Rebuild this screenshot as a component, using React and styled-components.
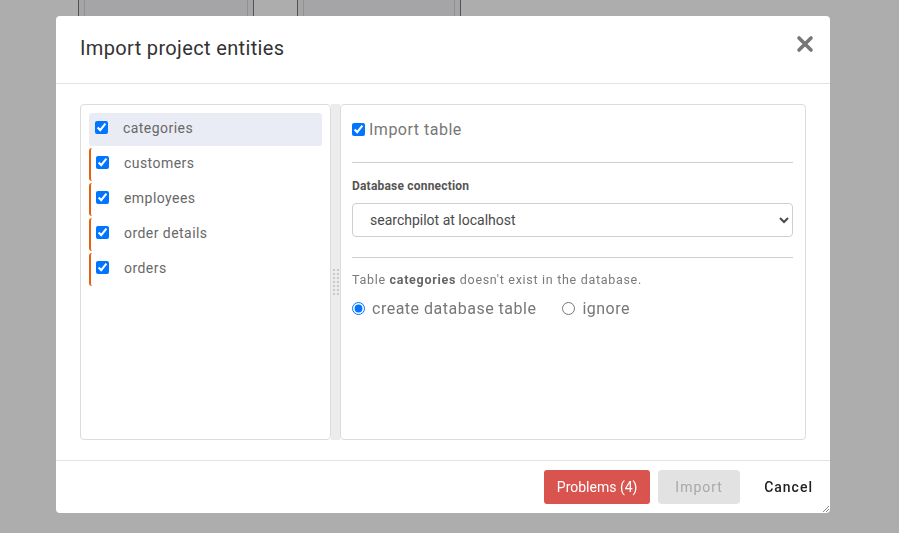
import styled, { createGlobalStyle } from "styled-components";

const GlobalStyle = createGlobalStyle`
  html, body {
    margin: 0;
    padding: 0;
    width: 100%;
    height: 100%;
    overflow: hidden;
    background: #fff;
    font-family: Roboto, "Liberation Sans", Arial, sans-serif;
  }
`;

const Page = styled.div`
  display: flex;
  gap: 43px;
  padding-left: 78px;
  height: 533px;
`;

const BackWindow = styled.div`
  box-sizing: border-box;
  width: ${(props) => props.width}px;
  height: 200px;
  margin-top: -40px;
  border-left: 1px solid #7a7a7a;
  border-right: 1px solid #7a7a7a;
  padding: 0 5px;
  background: #f4f4f8;
`;

const BackInner = styled.div`
  height: 100%;
  border-left: 1px solid #d6d6d6;
  border-right: 1px solid #d6d6d6;
  border-top: ${(props) => props.line}px solid transparent;
  box-shadow: inset 0 ${(props) => props.line}px 0 -${(props) => props.line - 1}px #8a8a8a;
`;

const Overlay = styled.div`
  position: fixed;
  inset: 0;
  background: rgba(0, 0, 0, 0.32);
  padding: 16px 0 0 56px;
`;

const Modal = styled.div`
  position: relative;
  width: 774px;
  height: 497px;
  background: #fff;
  border-radius: 4px;
  display: flex;
  flex-direction: column;
`;

const Header = styled.div`
  height: 68px;
  box-sizing: border-box;
  display: flex;
  align-items: center;
  justify-content: space-between;
  padding: 0 15px 3px 24px;
  border-bottom: 1px solid #e2e2e2;
`;

const Title = styled.h2`
  margin: 0;
  font-size: 20px;
  font-weight: 400;
  color: #333;
  letter-spacing: 0.35px;
`;

const CloseButton = styled.button`
  border: none;
  background: none;
  padding: 0;
  width: 20px;
  height: 20px;
  margin-top: -8px;
  cursor: pointer;
  display: flex;
  align-items: center;
  justify-content: center;
`;

const Body = styled.div`
  flex: 1;
  display: flex;
  padding: 20px 24px;
`;

const Panel = styled.div`
  border: 1px solid #dcdcdc;
  border-radius: 4px;
  background: #fff;
`;

const ListPanel = styled(Panel)`
  width: 251px;
  flex: none;
  box-sizing: border-box;
  padding: 8px;
`;

const EntityItem = styled.label`
  display: flex;
  align-items: center;
  height: 33px;
  margin-bottom: 2px;
  box-sizing: border-box;
  padding-left: ${(props) => (props.selected ? 6 : 5)}px;
  padding-bottom: 4px;
  border-left: ${(props) => (props.selected ? "none" : "2px solid #e8600a")};
  border-radius: 3px;
  background: ${(props) => (props.selected ? "#eaecf5" : "transparent")};
  color: #686868;
  font-size: 14px;
  letter-spacing: 0.45px;
  cursor: pointer;
`;

const Check = styled.input`
  width: 13px;
  height: 13px;
  margin: 0 ${(props) => props.gap || 15}px 0 0;
  flex: none;
`;

const Splitter = styled.div`
  width: 9px;
  flex: none;
  background: #ececec;
  display: flex;
  align-items: center;
  justify-content: center;
`;

const Grip = styled.div`
  display: grid;
  grid-template-columns: 2px 2px;
  gap: 2px;
  margin-top: 20px;
`;

const GripDot = styled.span`
  width: 2px;
  height: 2px;
  background: #c8c8c8;
`;

const DetailPanel = styled(Panel)`
  flex: 1;
  padding: 11px 12px 12px 11px;
`;

const ImportRow = styled.label`
  display: flex;
  align-items: center;
  height: 26px;
  font-size: 16px;
  color: #777;
  letter-spacing: 0.5px;
`;

const Rule = styled.hr`
  border: none;
  border-top: 1px solid #cfcfcf;
  margin: ${(props) => props.top}px 0 0;
`;

const FieldLabel = styled.div`
  margin-top: 15px;
  font-size: 12px;
  line-height: 16px;
  font-weight: 700;
  color: #555;
  letter-spacing: 0.2px;
`;

const Select = styled.select`
  margin-top: 9px;
  width: 100%;
  height: 34px;
  border: 1px solid #cfcfcf;
  border-radius: 4px;
  padding: 0 6px 0 13px;
  font-family: Roboto, "Liberation Sans", Arial, sans-serif;
  font-size: 14px;
  color: #4a4a4a;
  background: #fff;
`;

const Notice = styled.div`
  margin-top: 14px;
  font-size: 12.5px;
  line-height: 16px;
  color: #7a7a7a;
  letter-spacing: 0.7px;

  b {
    color: #666;
  }
`;

const RadioRow = styled.div`
  display: flex;
  align-items: center;
  gap: 26px;
  height: 24px;
  margin-top: 8px;
`;

const RadioOption = styled.label`
  display: flex;
  align-items: center;
  font-size: 16px;
  color: #777;
  letter-spacing: 0.5px;
`;

const Radio = styled.input`
  width: 13px;
  height: 13px;
  margin: 0 7px 0 0;
`;

const Footer = styled.div`
  height: 52px;
  border-top: 1px solid #e2e2e2;
  display: flex;
  align-items: center;
  justify-content: flex-end;
  padding-right: 5px;
`;

const Button = styled.button`
  height: 34px;
  width: ${(props) => (props.width ? `${props.width}px` : "auto")};
  border: none;
  border-radius: ${(props) => (props.variant === "danger" ? 3 : 4)}px;
  padding: 0 ${(props) => props.pad || 0}px;
  margin-left: ${(props) => props.gap || 0}px;
  font-family: Roboto, "Liberation Sans", Arial, sans-serif;
  font-size: 14px;
  font-weight: ${(props) => (props.variant === "text" ? 500 : 400)};
  letter-spacing: ${(props) => (props.variant === "danger" ? "0" : "1px")};
  background: ${(props) =>
    props.variant === "danger"
      ? "#d9534f"
      : props.variant === "disabled"
      ? "#e2e2e2"
      : "transparent"};
  color: ${(props) =>
    props.variant === "danger"
      ? "#fff"
      : props.variant === "disabled"
      ? "#a8a8a8"
      : "#222"};
  cursor: pointer;
`;

const ResizeGrip = styled.svg`
  position: absolute;
  right: 0;
  bottom: 0;
`;

const entities = ["categories", "customers", "employees", "order details", "orders"];

export default function App() {
  return (
    <>
      <GlobalStyle />
      <Page>
        <BackWindow width={176}>
          <BackInner line={4} />
        </BackWindow>
        <BackWindow width={164}>
          <BackInner line={8} />
        </BackWindow>
      </Page>
      <Overlay>
        <Modal>
          <Header>
            <Title>Import project entities</Title>
            <CloseButton aria-label="close">
              <svg width="18" height="18" viewBox="0 0 18 18">
                <path
                  d="M3 3 L15 15 M15 3 L3 15"
                  stroke="#777"
                  strokeWidth="3.6"
                  strokeLinecap="round"
                />
              </svg>
            </CloseButton>
          </Header>
          <Body>
            <ListPanel>
              {entities.map((name, i) => (
                <EntityItem key={name} selected={i === 0}>
                  <Check type="checkbox" defaultChecked />
                  {name}
                </EntityItem>
              ))}
            </ListPanel>
            <Splitter>
              <Grip>
                {Array.from({ length: 14 }).map((_, i) => (
                  <GripDot key={i} />
                ))}
              </Grip>
            </Splitter>
            <DetailPanel>
              <ImportRow>
                <Check type="checkbox" defaultChecked gap={4} />
                Import table
              </ImportRow>
              <Rule top={20} />
              <FieldLabel>Database connection</FieldLabel>
              <Select defaultValue="searchpilot">
                <option value="searchpilot">searchpilot at localhost</option>
              </Select>
              <Rule top={20} />
              <Notice>
                Table <b>categories</b> doesn't exist in the database.
              </Notice>
              <RadioRow>
                <RadioOption>
                  <Radio type="radio" name="mode" defaultChecked />
                  create database table
                </RadioOption>
                <RadioOption>
                  <Radio type="radio" name="mode" />
                  ignore
                </RadioOption>
              </RadioRow>
            </DetailPanel>
          </Body>
          <Footer>
            <Button variant="danger" width={106}>
              Problems (4)
            </Button>
            <Button variant="disabled" width={82} gap={8}>
              Import
            </Button>
            <Button variant="text" pad={12} gap={12}>
              Cancel
            </Button>
          </Footer>
          <ResizeGrip width="9" height="9" viewBox="0 0 9 9">
            <path d="M8 2 L2 8 M8 5 L5 8" stroke="#888" strokeWidth="1" />
          </ResizeGrip>
        </Modal>
      </Overlay>
    </>
  );
}
